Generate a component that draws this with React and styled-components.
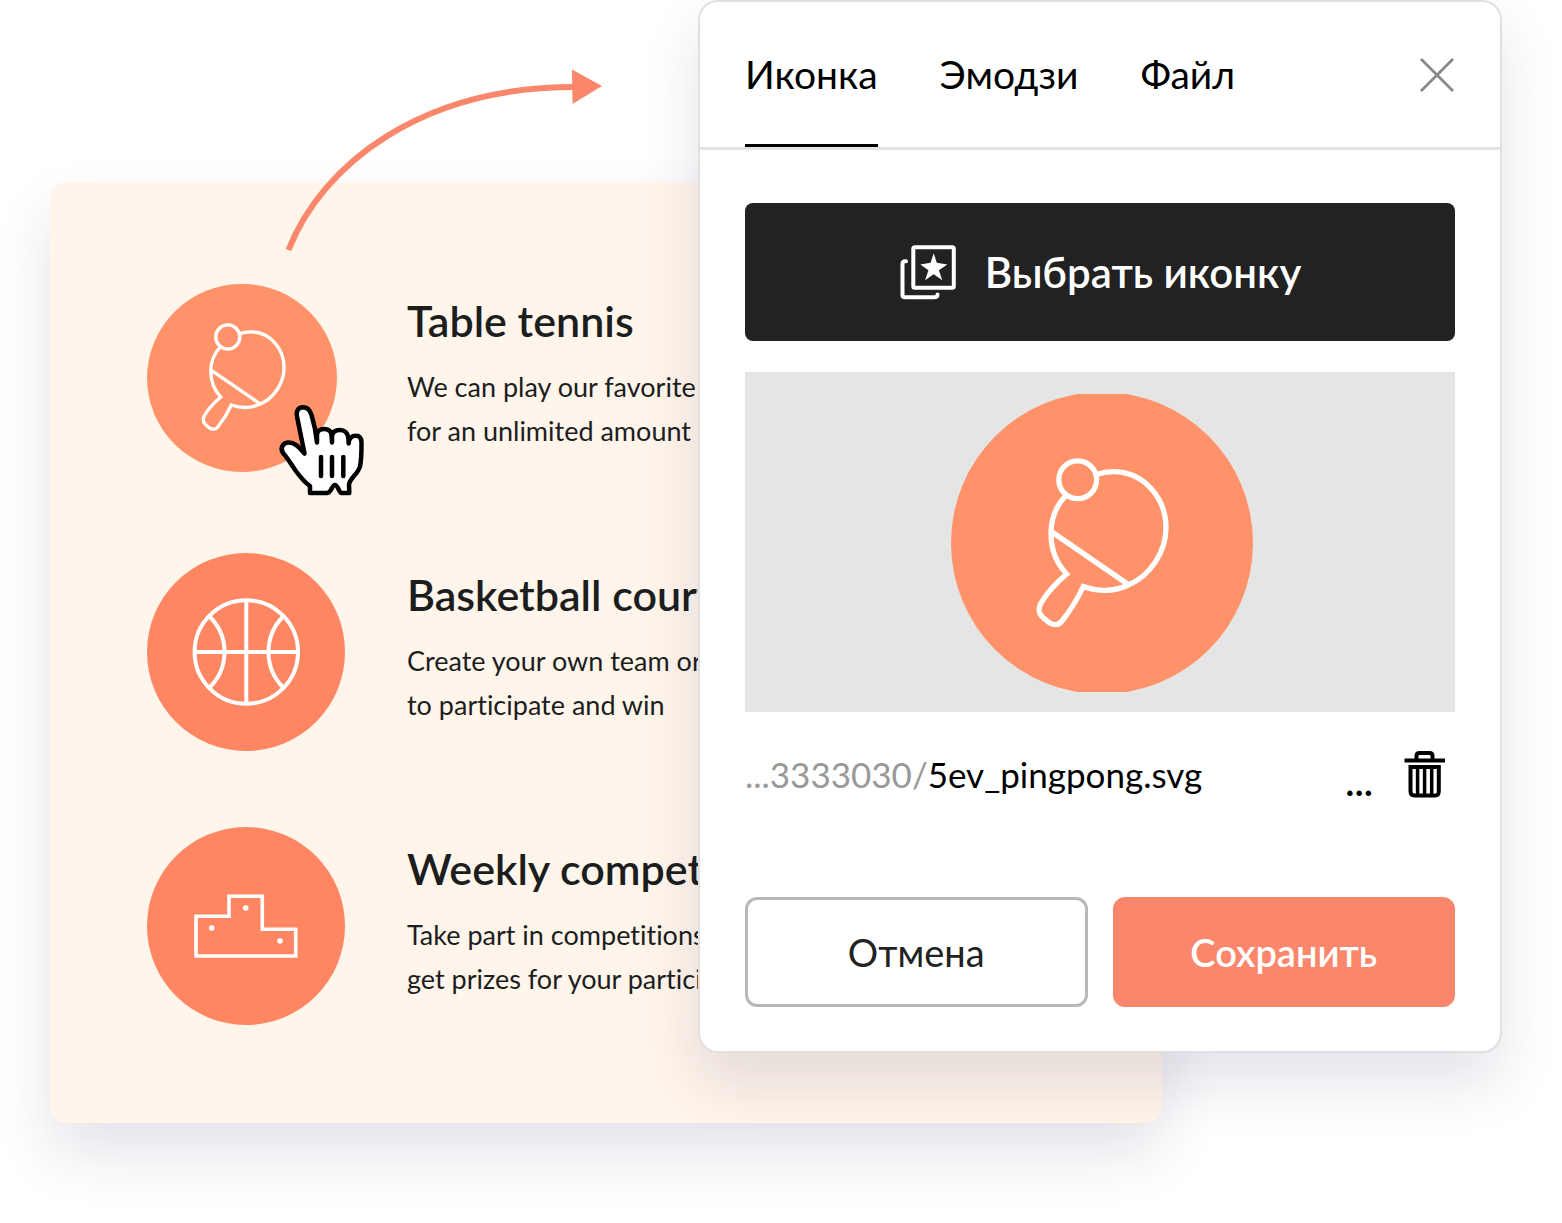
import React, { useState } from "react";
import styled, { createGlobalStyle } from "styled-components";

const GlobalStyle = createGlobalStyle`
  * {
    box-sizing: border-box;
  }
  body {
    margin: 0;
    background: #fff;
    color: #1c1e1e;
    font-family: Lato, "Open Sans", sans-serif;
    font-variant-ligatures: none;
  }
  button {
    font-family: inherit;
    cursor: pointer;
  }
`;

const Page = styled.main`
  display: grid;
  grid-template-columns: 648fr 464fr 340fr;
  align-items: start;
  padding: 0 60px 100px 50px;
  overflow: hidden;
`;

const Card = styled.section`
  position: relative;
  grid-row: 1;
  grid-column: 1 / 3;
  display: grid;
  gap: 76px;
  margin-top: 182px;
  padding: 97px 97px 98px;
  background: #fff5eb;
  border-radius: 16px;
  box-shadow: 0 30px 60px rgba(30, 28, 80, 0.12);
`;

const Feature = styled.article`
  display: grid;
  grid-template-columns: 198px 1fr;
  column-gap: 62px;
  height: 198px;
`;

const IconWrap = styled.div`
  position: relative;
  display: flex;
  align-items: center;
`;

const FeatureText = styled.div`
  padding-top: 14px;
  white-space: nowrap;
  min-width: 0;
`;

const Title = styled.h2`
  margin: 0 0 16px;
  font-size: 43px;
  font-weight: 600;
  line-height: 56px;
`;

const Text = styled.p`
  margin: 0;
  font-size: 27px;
  line-height: 44px;
`;

const Arrow = styled.svg`
  position: absolute;
  left: 230px;
  top: -122px;
`;

const Pointer = styled.svg`
  position: absolute;
  left: 131px;
  top: 123px;
`;

const Dialog = styled.section`
  position: relative;
  grid-row: 1;
  grid-column: 2 / 4;
  background: #fff;
  border: 2px solid #e0e0e0;
  border-radius: 20px;
  box-shadow: 0 30px 60px rgba(30, 28, 80, 0.12);
`;

const Header = styled.header`
  display: flex;
  justify-content: space-between;
  align-items: center;
  height: 148px;
  padding: 0 45px;
  border-bottom: 3px solid #e3e3e3;
`;

const Tabs = styled.nav`
  display: flex;
  gap: 62px;
  height: 100%;
`;

const Tab = styled.button`
  height: 100%;
  padding: 1px 0 0;
  border: 0;
  border-bottom: 3px solid ${(props) => (props.$active ? "#000" : "transparent")};
  background: none;
  color: #000;
  font-size: 39px;
  line-height: 48px;
`;

const IconButton = styled.button`
  display: flex;
  align-items: center;
  justify-content: center;
  padding: 0;
  border: 0;
  background: none;
  color: #000;
`;

const Body = styled.div`
  padding: 53px 45px 44px;
`;

const ChooseButton = styled.button`
  display: flex;
  align-items: center;
  justify-content: center;
  gap: 28px;
  width: 100%;
  height: 138px;
  border: 0;
  border-radius: 8px;
  background: #222;
  color: #fff;
  font-size: 42px;
  font-weight: 600;
`;

const Preview = styled.div`
  display: flex;
  align-items: center;
  justify-content: center;
  height: 340px;
  margin-top: 31px;
  padding: 2px 0 0 4px;
  background: #e5e5e5;
`;

const FileRow = styled.div`
  display: flex;
  align-items: center;
  height: 124px;
  padding-right: 9px;
`;

const FileName = styled.span`
  flex: 1;
  color: #000;
  font-size: 35px;
  line-height: 48px;
`;

const Muted = styled.span`
  color: #999;
`;

const More = styled(IconButton)`
  margin-right: 31px;
  padding-top: 14px;
  font-size: 39px;
  font-weight: 600;
  line-height: 48px;
`;

const Actions = styled.div`
  display: grid;
  grid-template-columns: 1fr 1fr;
  gap: 25px;
  margin-top: 61px;
`;

const ActionButton = styled.button`
  height: 110px;
  border: 3px solid ${(props) => (props.$primary ? "#fa876b" : "#b8b8b8")};
  border-radius: 12px;
  background: ${(props) => (props.$primary ? "#fa876b" : "#fff")};
  color: ${(props) => (props.$primary ? "#fff" : "#222")};
  font-size: 38px;
  font-weight: ${(props) => (props.$primary ? 600 : 400)};
`;

const Paddle = () => (
  <g stroke="#fff" strokeWidth="5.3">
    <circle cx="126.7" cy="85.7" r="18.9" />
    <path d="M145.5 80.5C151 78.5 156 77.7 162.3 77.7C192 77.7 215 103 215 134C215 158 199 182 177.3 191C170 194.5 162 196.3 154 196.3C146 196.3 139 195 132.3 192.5C126 206 119 217 111 227C107 232 103 231.500 98 228.500L92 223.500C87 219 87 215 90 209C96 199 105 189 115.7 180C106 170 100 156 100 139.3C100 125 105 112 114.7 101.7" />
    <path d="M101 138L178 191" />
  </g>
);

const PaddleIcon = () => (
  <svg width="190" height="188" viewBox="0 2.6 298 295" fill="none">
    <ellipse cx="149" cy="150" rx="149" ry="147.5" fill="#ff9268" />
    <Paddle />
  </svg>
);

const PaddlePreview = () => (
  <svg width="302" height="298" viewBox="0 0 302 298" fill="none">
    <circle cx="151" cy="149" r="151" fill="#ff9268" />
    <Paddle />
  </svg>
);

const BallIcon = () => (
  <svg width="198" height="198" viewBox="0 0 198 198" fill="none">
    <circle cx="99" cy="99" r="99" fill="#ff8662" />
    <g stroke="#fff" strokeWidth="4">
      <circle cx="99.300" cy="99" r="51.7" />
      <path d="M99.300 47V151M47.500 99H151M63 64C72 73 77.500 85 77.500 99S72 125 63 134M135.600 64C127 73 121.500 85 121.500 99S127 125 135.600 134" />
    </g>
  </svg>
);

const PodiumIcon = () => (
  <svg width="198" height="198" viewBox="0 0 198 198" fill="none">
    <circle cx="99" cy="99" r="99" fill="#ff8662" />
    <path
      d="M49 89.300H82V69.300H115.300V102.300H148.700V129H49Z"
      stroke="#fff"
      strokeWidth="3.600"
    />
    <g fill="#fff">
      <circle cx="98.700" cy="81" r="2.800" />
      <circle cx="64.700" cy="101" r="2.800" />
      <circle cx="133" cy="114" r="2.800" />
    </g>
  </svg>
);

const HandPointer = () => (
  <Pointer width="88" height="96" viewBox="0 0 88 96" aria-hidden="true">
    <g stroke="#000" strokeWidth="4.500" strokeLinecap="round" strokeLinejoin="round">
      <path
        d="M26.500 51.500L19.300 16C17.500 9 20 5.500 25 5.300C29.500 5.300 32 8 33.500 13C36 21 38 30 39 40.500V33C39 29 42 27 46 27C50.500 27 53 29 53.500 33L54 40.500V34C54.500 30 57.500 28 62 28C66.500 28 69.500 31 70.200 35L70.700 41.500C70.700 36 74 33.700 78 33.700C82 33.700 83.500 37 83.500 41C83.500 50 83.500 58 82 64.500C80 72 72 76 71 82.500L71.300 91H63.500C61 91 60 83 57 83C54 83 53 91 49 91H32V84C26 80 21.500 74 17.500 68.500C13 62 9.500 56 5 51C2 46.500 4.500 41 10 40.500C17 40 21 45.500 26.500 51.500Z"
        fill="#fff"
      />
      <path d="M43 55V74M54 55V74M65.300 55V74" />
    </g>
  </Pointer>
);

const StarIcon = () => (
  <svg width="58" height="58" viewBox="0 0 58 58" fill="none">
    <g stroke="#fff" strokeWidth="4" strokeLinecap="round">
      <rect x="14.300" y="4.300" width="40.500" height="40.500" rx="1.500" />
      <path d="M7 18.300C4.500 18 3.500 18.500 3.500 21V52C3.500 54 4 54.300 6 54.300H35C38 54.300 38.500 54 38.500 51.500" />
    </g>
    <path
      d="M34.700 10.300L37.800 19.800L48.300 21.500L39.900 27.300L43.300 37.200L34.700 31.200L26 37.200L29.500 27.300L21.300 21.500L31.600 19.800Z"
      fill="#fff"
    />
  </svg>
);

const TrashIcon = () => (
  <svg width="42" height="50" viewBox="0 0 42 50" fill="none" stroke="#000">
    <path d="M.5 11.500H41M12.500 11V7C12.500 5 13.500 4 15.500 4H25.500C27.500 4 28.500 5 28.500 7V11" strokeWidth="4" />
    <path d="M6.500 18H34.800V42C34.800 45 34 46.500 31 46.500H10.500C7.500 46.500 6.500 45 6.500 42Z" strokeWidth="4" />
    <path d="M13.600 18V46M20.600 18V46M27.700 18V46" strokeWidth="3.500" />
  </svg>
);

const features = [
  {
    icon: <PaddleIcon />,
    pointer: true,
    title: "Table tennis",
    lines: ["We can play our favorite", "for an unlimited amount"],
  },
  {
    icon: <BallIcon />,
    title: "Basketball court",
    lines: ["Create your own team or", "to participate and win"],
  },
  {
    icon: <PodiumIcon />,
    title: "Weekly competitions",
    lines: ["Take part in competitions", "get prizes for your participation"],
  },
];

const tabs = ["Иконка", "Эмодзи", "Файл"];

const App = () => {
  const [activeTab, setActiveTab] = useState("Иконка");

  return (
    <>
      <GlobalStyle />
      <Page>
        <Card>
          {features.map((item) => (
            <Feature key={item.title}>
              <IconWrap>
                {item.icon}
                {item.pointer && <HandPointer />}
              </IconWrap>
              <FeatureText>
                <Title>{item.title}</Title>
                {item.lines.map((line) => (
                  <Text key={line}>{line}</Text>
                ))}
              </FeatureText>
            </Feature>
          ))}
          <Arrow width="330" height="200" viewBox="0 0 330 200" fill="none" aria-hidden="true">
            <path d="M8.500 190C42 105 140 27 295 27" stroke="#fa876b" strokeWidth="6" />
            <path d="M292 9.500L322 26L292.500 44Z" fill="#fa876b" />
          </Arrow>
        </Card>

        <Dialog>
          <Header>
            <Tabs>
              {tabs.map((tab) => (
                <Tab key={tab} type="button" $active={tab === activeTab} onClick={() => setActiveTab(tab)}>
                  {tab}
                </Tab>
              ))}
            </Tabs>
            <IconButton type="button" aria-label="Закрыть">
              <svg width="36" height="36" viewBox="0 0 36 36" fill="none" stroke="#888" strokeWidth="2.800">
                <path d="M2 2L34 34M34 2L2 34" />
              </svg>
            </IconButton>
          </Header>
          <Body>
            <ChooseButton type="button">
              <StarIcon />
              Выбрать иконку
            </ChooseButton>
            <Preview>
              <PaddlePreview />
            </Preview>
            <FileRow>
              <FileName>
                <Muted>...3333030/</Muted>5ev_pingpong.svg
              </FileName>
              <More type="button">...</More>
              <IconButton type="button" aria-label="Удалить">
                <TrashIcon />
              </IconButton>
            </FileRow>
            <Actions>
              <ActionButton type="button">Отмена</ActionButton>
              <ActionButton type="button" $primary>
                Сохранить
              </ActionButton>
            </Actions>
          </Body>
        </Dialog>
      </Page>
    </>
  );
};

export default App;
